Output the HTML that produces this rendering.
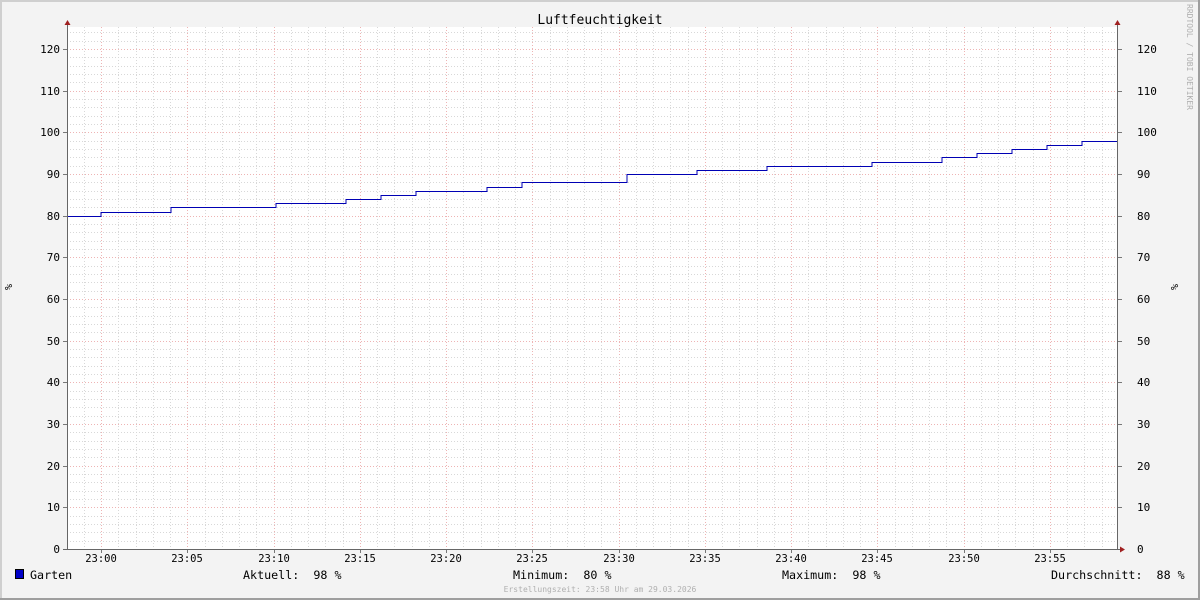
<!DOCTYPE html><html><head><meta charset="utf-8"><style>
body{margin:0;width:1200px;height:600px;overflow:hidden;background:#f3f3f3}
svg{display:block}
text{font-family:"DejaVu Sans Mono","Liberation Mono",monospace;fill:#000}
</style></head><body>
<svg id="g" width="1200" height="600" xmlns="http://www.w3.org/2000/svg">
<rect x="0" y="0" width="1200" height="600" fill="#f3f3f3"/>
<rect x="0" y="0" width="1200" height="2" fill="#cfcfcf"/>
<rect x="0" y="0" width="2" height="600" fill="#cfcfcf"/>
<rect x="0" y="598" width="1200" height="2" fill="#9e9e9e"/>
<rect x="1198" y="0" width="2" height="600" fill="#9e9e9e"/>
<rect x="67" y="27" width="1051" height="522" fill="#fff"/>
<g id="grid"></g>
<text x="600" y="24" font-size="13" text-anchor="middle">Luftfeuchtigkeit</text>
<text x="1187" y="4" font-size="8" style="fill:#b0b0b0" transform="rotate(90 1187 4)">RRDTOOL / TOBI OETIKER</text>
<text x="12" y="287" font-size="10" text-anchor="middle" transform="rotate(-90 12 287)">%</text>
<text x="1178" y="287" font-size="10" text-anchor="middle" transform="rotate(-90 1178 287)">%</text>
<rect x="15.5" y="569.5" width="8" height="9" fill="#0000c8" stroke="#000" stroke-width="1"/>
<text x="30" y="579" font-size="11.7" xml:space="preserve">Garten</text>
<text x="243" y="579" font-size="11.7" xml:space="preserve">Aktuell:  98 %</text>
<text x="513" y="579" font-size="11.7" xml:space="preserve">Minimum:  80 %</text>
<text x="782" y="579" font-size="11.7" xml:space="preserve">Maximum:  98 %</text>
<text x="1051" y="579" font-size="11.7" xml:space="preserve">Durchschnitt:  88 %</text>
<text x="600" y="592" font-size="8" text-anchor="middle" style="fill:#b0b0b0">Erstellungszeit: 23:58 Uhr am 29.03.2026</text>
</svg>
<script>
var g=document.getElementById('grid'),s='';
function L(x1,y1,x2,y2,c,d){s+='<line x1="'+x1+'" y1="'+y1+'" x2="'+x2+'" y2="'+y2+'" stroke="'+c+'" stroke-width="1"'+(d?' stroke-dasharray="'+d+'"':'')+'/>';}
var px=17.25,x0=101,ppu=500/120;
for(var m=-2;m<=59;m++){var x=Math.round(x0+m*px)+0.5;if(x<67||x>1118)continue;
 if(m%5==0){L(x,27,x,549,'#eeb4b4','1,2');}else L(x,27,x,549,'#d8d8d8','1,2');}
for(var v=0;v<=125;v+=2){var y=Math.round(549-v*ppu)+0.5;
 if(v%10==0){L(67,y,1118,y,'#eeb4b4','1,2');}else L(67,y,1118,y,'#d8d8d8','1,2');}
for(var v=0;v<=120;v+=10){var y=Math.round(549-v*ppu);
 s+='<text x="60" y="'+(y+4)+'" font-size="11" text-anchor="end">'+v+'</text>';
 s+='<text x="1137" y="'+(y+4)+'" font-size="11">'+v+'</text>';
 L(63,y+0.5,67,y+0.5,'#777');L(1118,y+0.5,1122,y+0.5,'#777');}
for(var k=0;k<=11;k++){var x=Math.round(x0+k*5*px);var mm=k*5;
 s+='<text x="'+x+'" y="562" font-size="10.5" text-anchor="middle">23:'+(mm<10?'0':'')+mm+'</text>';
 L(x+0.5,549,x+0.5,553,'#777');}
var pts=[[67,80],[101,81],[171,82],[276,83],[346,84],[381,85],[416,86],[487,87],[522,88],[627,90],[697,91],[767,92],[872,93],[942,94],[977,95],[1012,96],[1047,97],[1082,98],[1118,98]];
var d='M67 '+(Math.round(549-80*ppu)+0.5);
for(var i=1;i<pts.length;i++){var y2=Math.round(549-pts[i][1]*ppu)+0.5;d+=' H'+pts[i][0]+' V'+y2;}
s+='<path d="'+d+'" fill="none" stroke="#0000b4" stroke-width="1"/>';
L(67.5,22,67.5,549,'#666');L(1117.5,22,1117.5,549,'#666');L(63,549.5,1123,549.5,'#666');
s+='<path d="M64.5 25 L67.5 20 L70.5 25 Z" fill="#a02020"/>';
s+='<path d="M1114.5 25 L1117.5 20 L1120.5 25 Z" fill="#a02020"/>';
s+='<path d="M1120 546.5 L1125 549.5 L1120 552.5 Z" fill="#a02020"/>';
g.innerHTML=s;
</script>
</body></html>
